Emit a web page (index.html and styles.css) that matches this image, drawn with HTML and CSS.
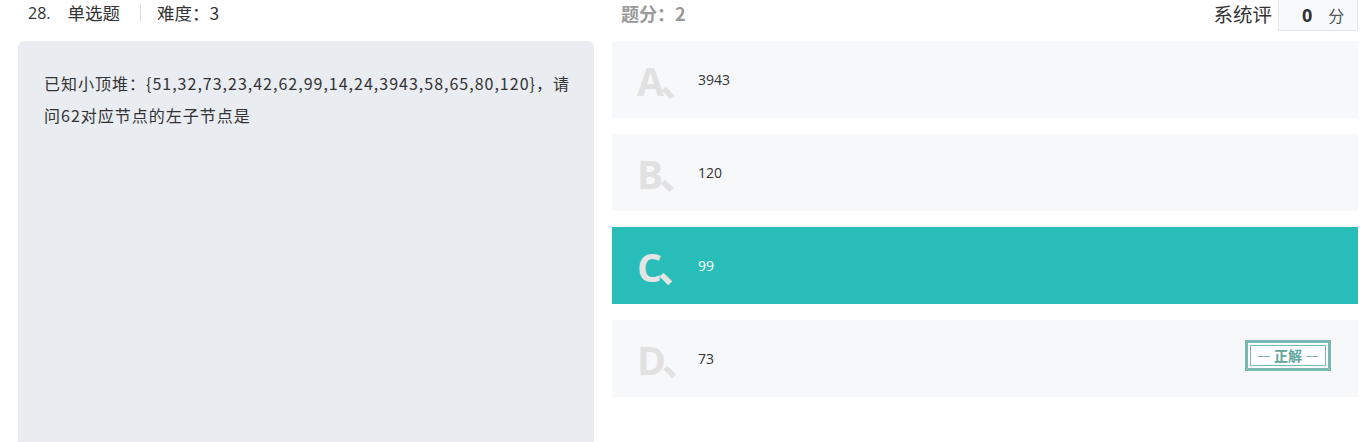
FILE: index.html
```html
<!DOCTYPE html>
<html lang="zh">
<head>
<meta charset="utf-8">
<link rel="stylesheet" href="styles.css">
</head>
<body>
<div class="page">
  <div class="header">
    <div class="meta">
      <span class="num">28.</span>
      <span class="type">单选题</span>
      <span class="sep"></span>
      <span class="diff">难度：3</span>
    </div>
    <div class="meta-right">
      <span class="score">题分：2</span>
      <div class="sys">
        <span class="sys-label">系统评</span>
        <div class="sys-box"><b>0</b><span>分</span></div>
      </div>
    </div>
  </div>
  <div class="main">
    <div class="question">已知小顶堆：{51,32,73,23,42,62,99,14,24,3943,58,65,80,120}，请问62对应节点的左子节点是</div>
    <div class="options">
      <div class="option"><span class="letter">A、</span><span class="val">3943</span></div>
      <div class="option"><span class="letter">B、</span><span class="val">120</span></div>
      <div class="option selected"><span class="letter">C、</span><span class="val">99</span></div>
      <div class="option"><span class="letter">D、</span><span class="val">73</span>
        <div class="badge"><span>— 正解 —</span></div>
      </div>
    </div>
  </div>
</div>
</body>
</html>
```
FILE: styles.css
```css
* { box-sizing: border-box; }
html, body { margin: 0; padding: 0; background: #fff; overflow: hidden; }
body {
  font-family: "Noto Sans CJK SC", "Noto Sans", sans-serif;
  color: #333;
}
.page { padding: 0 9px 0 18px; }
.header {
  display: grid;
  grid-template-columns: 576px 1fr;
  column-gap: 18px;
  height: 31px;
  margin-bottom: 10px;
  align-items: center;
}
.meta {
  display: flex;
  align-items: center;
  padding-left: 10px;
  color: #333;
  height: 31px;
  padding-bottom: 6px;
}
.num { margin-right: 17px; font-family: "Open Sans", sans-serif; font-size: 16px; }
.type { font-size: 17.5px; }
.sep {
  width: 1px; height: 18px; background: #dcdcdc;
  margin: 0 16px 0 20px;
}
.diff { font-size: 17.5px; }
.meta-right {
  display: flex;
  justify-content: space-between;
  align-items: center;
  padding-left: 9px;
  height: 31px;
}
.score {
  font-weight: bold;
  color: #999;
  font-size: 18px;
  padding-bottom: 6px;
}
.sys { display: flex; align-items: flex-start; height: 31px; }
.sys-label { font-size: 19.5px; color: #333; margin-right: 6px; margin-top: -1px; }
.sys-box {
  width: 80px; height: 31px;
  border: 1px solid #e4e6ea;
  border-top: none;
  background: #f8f9fb;
  display: flex; align-items: center;
  padding-left: 23px;
}
.sys-box b { font-family: "Open Sans", sans-serif; font-size: 18px; color: #333; margin-right: 16px; }
.sys-box span { font-size: 16px; color: #555; }
.main {
  display: grid;
  grid-template-columns: 576px 1fr;
  column-gap: 18px;
}
.question {
  background: #e9ecf1;
  border-radius: 6px 6px 0 0;
  min-height: 420px;
  padding: 26px 18px 0 26px;
  font-size: 16px;
  line-height: 32px;
  color: #333;
  letter-spacing: 1px;
}
.options { display: flex; flex-direction: column; gap: 16px; }
.option {
  height: 77px;
  background: #f7f8fa;
  display: flex;
  align-items: center;
  padding-left: 25px;
  padding-right: 27px;
}
.option.selected { background: #29bdb9; }
.letter {
  font-family: "Open Sans", "Noto Sans CJK SC", sans-serif;
  font-weight: bold;
  font-size: 39px;
  color: #e1e1e1;
  width: 61px;
  flex: none;
  letter-spacing: -4px;
  margin-top: -2px;
}
.selected .letter { color: #e4e4e4; }
.val {
  font-family: "Open Sans", sans-serif;
  font-size: 14px;
  color: #333;
}
.selected .val { color: #fff; }
.badge {
  margin-left: auto;
  border: 3px solid #7bb8b1;
  padding: 2px;
  background: #fff;
  margin-top: -6px;
}
.badge span {
  display: block;
  border: 1px solid #7bb8b1;
  width: 76px; height: 21px;
  text-align: center;
  font-size: 14px;
  line-height: 19px;
  font-weight: bold;
  color: #5ea69e;
}
```
